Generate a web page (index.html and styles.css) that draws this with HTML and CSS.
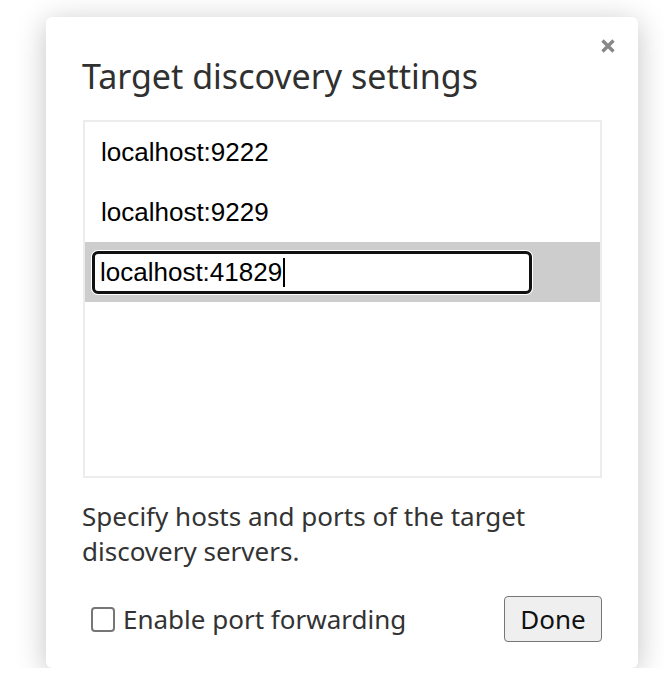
FILE: index.html
```html
<!DOCTYPE html>
<html lang="en">
<head>
    <meta charset="UTF-8">
    <meta name="viewport" content="width=device-width, initial-scale=1.0">
    <title>Target discovery settings</title>
    <link rel="stylesheet" href="styles.css">
</head>
<body>
    <div class="dialog">
        <button class="close" type="button" aria-label="Close">
            <svg width="16" height="16" viewBox="0 0 16 16">
                <path d="M2.5 2.5 L13.5 13.5 M13.5 2.5 L2.5 13.5" stroke="#888" stroke-width="3.4" stroke-linecap="butt"/>
            </svg>
        </button>

        <h1>Target discovery settings</h1>

        <div class="host-list">
            <div class="host-row">localhost:9222</div>
            <div class="host-row">localhost:9229</div>
            <div class="host-row selected">
                <div class="host-field">localhost:41829<span class="caret"></span></div>
            </div>
        </div>

        <p class="hint">Specify hosts and ports of the target discovery servers.</p>

        <div class="footer">
            <label class="check">
                <input type="checkbox">
                <span>Enable port forwarding</span>
            </label>
            <button class="done" type="button">Done</button>
        </div>
    </div>
</body>
</html>
```

FILE: styles.css
```css
body {
    margin: 0;
    background-color: #fff;
    font-family: "Noto Sans", "Open Sans", sans-serif;
    color: #333;
}

.dialog {
    position: relative;
    box-sizing: border-box;
    width: 592px;
    height: 651px;
    margin: 17px 0 0 46px;
    padding: 36px 36px 0 36px;
    background-color: #fff;
    border-radius: 6px;
    box-shadow: 0 5px 30px rgba(0, 0, 0, 0.24);
}

.close {
    position: absolute;
    top: 21px;
    right: 22px;
    width: 16px;
    height: 16px;
    padding: 0;
    border: none;
    background: none;
    cursor: pointer;
}

.close svg {
    display: block;
    filter: blur(0.4px);
}

h1 {
    margin: 0;
    font-size: 34px;
    font-weight: 400;
    color: #303030;
}

.host-list {
    box-sizing: border-box;
    height: 358px;
    margin-top: 21px;
    margin-left: 1px;
    border: 2px solid #ececec;
}

.host-row {
    height: 60px;
    line-height: 60px;
    padding: 0 16px;
    font-family: "Liberation Sans", Arial, sans-serif;
    font-size: 26px;
    color: #000;
}

.host-row.selected {
    display: flex;
    align-items: center;
    padding: 0 7px;
    background-color: #cdcdcd;
}

.host-field {
    box-sizing: border-box;
    width: 440px;
    height: 43px;
    padding: 0 5px;
    line-height: 37px;
    background-color: #fff;
    border: 3px solid #111;
    border-radius: 6px;
    box-shadow: 0 0 0 1px #fff;
}

.caret {
    display: inline-block;
    width: 2px;
    height: 29px;
    margin-left: 1px;
    vertical-align: -6px;
    background-color: #000;
}

.hint {
    margin: 21px 0 0 0;
    font-size: 26px;
    line-height: 35px;
    color: #333;
}

.footer {
    display: flex;
    align-items: center;
    justify-content: space-between;
    margin-top: 27px;
}

.check {
    display: flex;
    align-items: center;
    gap: 8px;
    margin-left: 9px;
    font-size: 26px;
    color: #333;
}

.check input {
    appearance: none;
    box-sizing: border-box;
    width: 24px;
    height: 25px;
    margin: 0;
    border: 2px solid #767676;
    border-radius: 4px;
    background-color: #fff;
}

.done {
    box-sizing: border-box;
    width: 98px;
    height: 46px;
    padding: 0;
    font-family: "Noto Sans", "Open Sans", sans-serif;
    font-size: 26px;
    color: #111;
    background-color: #efefef;
    border: 1px solid #767676;
    border-radius: 4px;
}
```
